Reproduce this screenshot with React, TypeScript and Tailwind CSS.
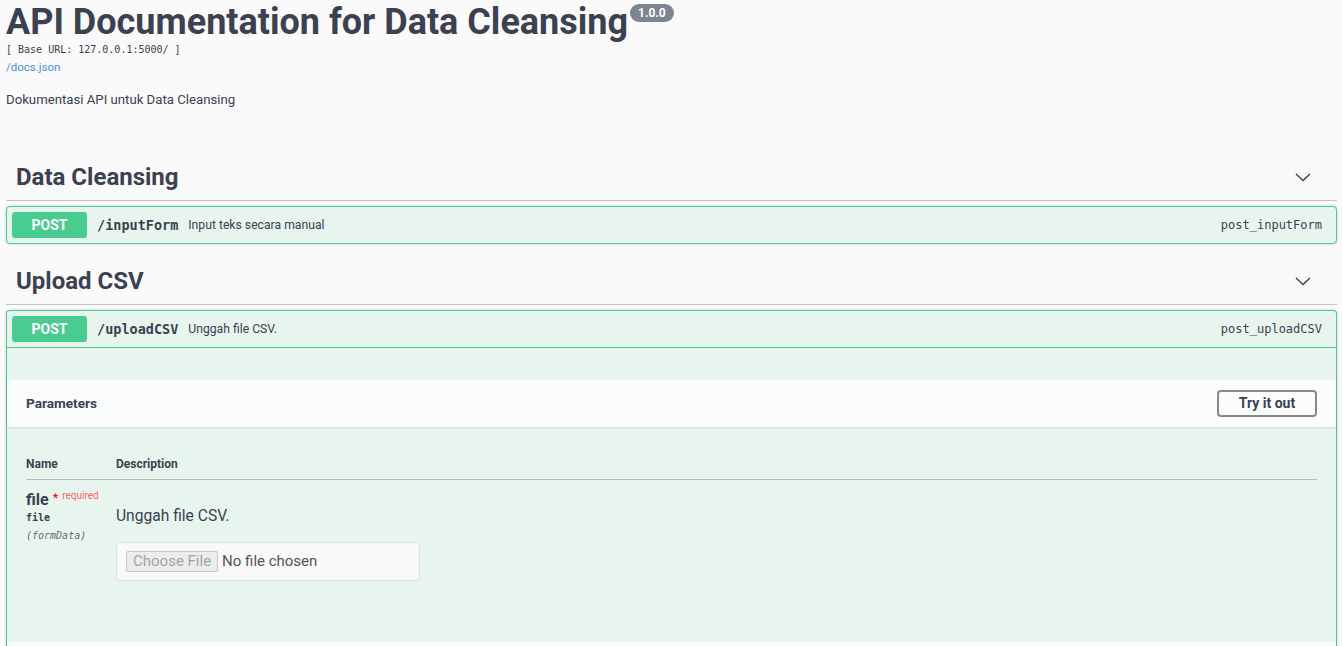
const sans = { fontFamily: 'Roboto, "Liberation Sans", Arial, sans-serif' };
const mono = '[font-family:"DejaVu_Sans_Mono",monospace]';

function Chevron() {
  return (
    <svg width="20" height="20" viewBox="0 0 20 20" className="text-[#3b4151]">
      <path d="M3 7 L10 13.5 L17 7" fill="none" stroke="currentColor" strokeWidth="1.4" />
    </svg>
  );
}

function TagHeader({ title }: { title: string }) {
  return (
    <div className="flex h-[47px] items-center justify-between border-b border-[#c1c3c7] pl-[10px] pr-[24px]">
      <h3 className="text-[24px] font-bold text-[#3b4151]">{title}</h3>
      <Chevron />
    </div>
  );
}

function Summary({ path, summary, opId }: { path: string; summary: string; opId: string }) {
  return (
    <div className="flex h-[36px] items-center px-[5px]">
      <span className="flex h-[26px] w-[75px] items-center justify-center rounded-[3px] bg-[#49cc90] text-[14px] font-bold text-white">
        POST
      </span>
      <span className={`${mono} px-[10px] text-[13.5px] font-bold text-[#3b4151]`}>{path}</span>
      <span className="text-[12.2px] text-[#3b4151]">{summary}</span>
      <span className={`${mono} ml-auto pr-[9px] text-[12px] text-[#3b4151]`}>{opId}</span>
    </div>
  );
}

export default function App() {
  return (
    <div style={sans} className="min-h-screen overflow-hidden bg-[#fafafa] pl-[6px] pr-[5px] text-[#3b4151]">
      {/* info */}
      <div className="h-[154px]">
        <div className="flex items-start pt-[2px]">
          <h2 className="text-[36px] leading-[41px] font-bold text-[#3b4151]">API Documentation for Data Cleansing</h2>
          <span className="mt-[2px] ml-[2px] flex h-[18px] items-center rounded-full bg-[#7d8492] px-[8px] text-[12px] font-bold text-white">
            1.0.0
          </span>
        </div>
        <div className={`${mono} text-[10px] leading-[14px] text-[#3b4151]`}>[ Base URL: 127.0.0.1:5000/ ]</div>
        <div className="mt-[3px] text-[11.5px] leading-[14px] text-[#4990e2]">/docs.json</div>
        <p className="mt-[17px] text-[13.2px] leading-[18px]">Dokumentasi API untuk Data Cleansing</p>
      </div>

      <TagHeader title="Data Cleansing" />
      <div className="mt-[5px] rounded-[4px] border border-[#49cc90] bg-[#e8f5ef] shadow-[0_0_3px_rgba(0,0,0,0.19)]">
        <Summary path="/inputForm" summary="Input teks secara manual" opId="post_inputForm" />
      </div>

      <div className="mt-[14px]">
        <TagHeader title="Upload CSV" />
      </div>
      <div className="mt-[5px] rounded-t-[4px] border border-b-0 border-[#49cc90] bg-[#e8f5ef] shadow-[0_0_3px_rgba(0,0,0,0.19)]">
        <div className="border-b border-[#49cc90]">
          <Summary path="/uploadCSV" summary="Unggah file CSV." opId="post_uploadCSV" />
        </div>
        <div className="h-[32px]" />
        <div className="flex h-[47px] items-center justify-between bg-[#fbfdfc] px-[19px] shadow-[0_1px_2px_rgba(0,0,0,0.1)]">
          <h4 className="text-[13.6px] font-bold">Parameters</h4>
          <button className="h-[27px] w-[100px] rounded-[4px] border-2 border-[#888] text-[14px] font-bold text-[#3b4151]">
            Try it out
          </button>
        </div>
        <div className="h-[215px] px-[19px] pt-[31px]">
          <div className="flex h-[22px] items-start border-b border-[#b6bbbd] text-[12px] leading-[13px] font-bold">
            <div className="w-[90px]">Name</div>
            <div>Description</div>
          </div>
          <div className="flex pt-[11px]">
            <div className="w-[90px]">
              <div className="flex items-start">
                <span className="text-[16px] leading-[18px] font-bold">file</span>
                <span className="ml-[4px] text-[13px] leading-[13px] text-[#ff0000]">*</span>
                <span className="ml-[4px] text-[10px] leading-[10px] text-[#ff6666]">required</span>
              </div>
              <div className={`${mono} mt-[2px] text-[10px] leading-[14px] font-semibold`}>file</div>
              <div className={`${mono} mt-[4px] text-[10px] leading-[14px] text-[#6b6b6b] italic`}>(formData)</div>
            </div>
            <div>
              <p className="mt-[16px] text-[15.6px] leading-[18px]">Unggah file CSV.</p>
              <div className="mt-[17px] flex h-[39px] w-[304px] items-center rounded-[4px] border border-[#dedede] bg-[#f9f9f9] px-[9px]">
                <span className="flex h-[21px] items-center rounded-[2px] border border-[#c7c7c7] bg-[#ececec] px-[6px] text-[15px] text-[#a3a3a3]">
                  Choose File
                </span>
                <span className="ml-[4px] text-[15px] text-[#555]">No file chosen</span>
              </div>
            </div>
          </div>
        </div>
        <div className="h-[20px] bg-[#fbfdfc] shadow-[0_1px_2px_rgba(0,0,0,0.1)]" />
      </div>
    </div>
  );
}
